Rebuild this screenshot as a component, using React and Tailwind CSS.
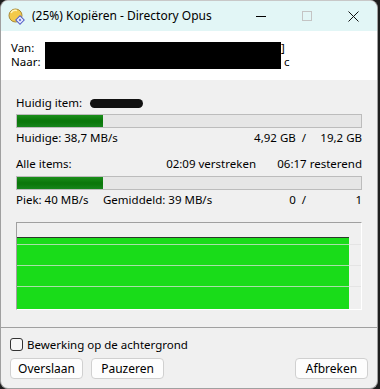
import React from 'react';

const font = { fontFamily: '"Noto Sans", "Segoe UI", sans-serif' };

function Bar({ pct }) {
  return (
    <div className="h-[14px] border border-[#bcbcbc] bg-[#e6e6e6]">
      <div
        className="h-full bg-[linear-gradient(#1b8f1b,#0b780b_45%,#0b780b_60%,#16851b)]"
        style={{ width: pct + '%' }}
      />
    </div>
  );
}

function Button({ children }) {
  return (
    <button className="w-[73px] h-[21px] bg-[#fdfdfd] border border-[#d0d0d0] rounded-[4px] text-[12px] text-black leading-none">
      {children}
    </button>
  );
}

export default function App() {
  return (
    <div className="w-[380px] h-[389px] bg-[#1e1e1e] flex" style={font}>
      <div className="w-[378px] h-[389px] bg-[#f0f0f0] rounded-lg border border-[#a0a0a0] border-t-[#c8c8c8] overflow-hidden flex flex-col">
        {/* titelbalk */}
        <div className="h-[30px] bg-[#e2f6f6] flex items-center shrink-0">
          <svg className="ml-[7px]" width="17" height="17" viewBox="0 0 17 17">
            <circle cx="7.5" cy="7.5" r="6.5" fill="#f3c94a" stroke="#a88a3a" strokeWidth="1" />
            <path d="M3 5 A5 5 0 0 1 9 2.5" stroke="#fff3b8" strokeWidth="1.5" fill="none" />
            <rect x="9" y="9" width="6" height="6" transform="rotate(45 12 12)" fill="#eef0ff" stroke="#5560c8" strokeWidth="1" />
            <rect x="11" y="11" width="2" height="2" transform="rotate(45 12 12)" fill="#5a6ad8" />
          </svg>
          <span className="ml-[7px] text-[12px] text-black">(25%) Kopiëren - Directory Opus</span>
          <div className="ml-auto flex items-center h-full">
            <div className="w-[46px] flex justify-center">
              <div className="w-[10px] h-px bg-black" />
            </div>
            <div className="w-[46px] flex justify-center">
              <div className="w-[10px] h-[10px] border border-[#c4c4c4]" />
            </div>
            <div className="w-[46px] flex justify-center mr-[1px]">
              <svg width="11" height="11" viewBox="0 0 11 11">
                <path d="M0.5 0.5 L10.5 10.5 M10.5 0.5 L0.5 10.5" stroke="#111" strokeWidth="1" />
              </svg>
            </div>
          </div>
        </div>

        {/* bron / doel */}
        <div className="h-[49px] bg-white shrink-0 relative text-[11.5px] text-black leading-[14px] pt-[10px] pl-[10px]">
          <div>Van:</div>
          <div>Naar:</div>
          <div className="absolute left-[44px] top-[11px] w-[236px] h-[27px] bg-black" />
          <span className="absolute left-[280px] top-[10px]">]</span>
          <span className="absolute left-[283px] top-[24px]">c</span>
        </div>

        {/* voortgang */}
        <div className="flex-1 px-[15px] pt-[16px] text-[11.5px] text-black leading-[14px]">
          <div className="flex items-center h-[14px]">
            <span className="w-[74px]">Huidig item:</span>
            <div className="w-[53px] h-[9px] bg-[#111] rounded-full" />
          </div>
          <div className="mt-[4px]">
            <Bar pct={25} />
          </div>
          <div className="flex mt-[3px] h-[14px]">
            <span>Huidige: 38,7 MB/s</span>
            <span className="ml-auto">4,92 GB&nbsp;&nbsp;/</span>
            <span className="w-[56px] text-right">19,2 GB</span>
          </div>

          <div className="flex mt-[12px] h-[14px]">
            <span>Alle items:</span>
            <span className="ml-auto">02:09 verstreken</span>
            <span className="w-[106px] text-right">06:17 resterend</span>
          </div>
          <div className="mt-[5px]">
            <Bar pct={25} />
          </div>
          <div className="flex mt-[3px] h-[14px]">
            <span className="w-[87px]">Piek: 40 MB/s</span>
            <span>Gemiddeld: 39 MB/s</span>
            <span className="ml-auto">0&nbsp;&nbsp;/</span>
            <span className="w-[56px] text-right">1</span>
          </div>

          {/* grafiek */}
          <div className="mt-[15px] h-[88px] border border-[#a0a0a0] border-r-white border-b-white flex flex-col">
            <div className="h-[14px]" />
            <div className="flex-1 relative">
              <div className="absolute left-0 right-0 top-[7px] h-px bg-[#e4e4e4]" />
              <div className="absolute left-0 right-0 top-[28px] h-px bg-[#e4e4e4]" />
              <div className="absolute left-0 right-0 top-[49px] h-px bg-[#e4e4e4]" />
              <div className="absolute left-0 top-0 bottom-0 w-[332px] bg-[#19dc19] border-t-[1.5px] border-[#2a3a2a]">
                <div className="absolute left-0 right-0 top-[6px] h-px bg-[#a8e0a8]" />
                <div className="absolute left-0 right-0 top-[27px] h-px bg-[#a8e0a8]" />
                <div className="absolute left-0 right-0 top-[48px] h-px bg-[#a8e0a8]" />
              </div>
            </div>
          </div>
        </div>

        {/* onderkant */}
        <div className="shrink-0 h-[61px] border-t border-[#a0a0a0] px-[9px] pt-[10px]">
          <label className="flex items-center gap-[4px] text-[11.5px] text-black h-[13px]">
            <span className="w-[13px] h-[13px] border border-[#333] rounded-[3px] bg-[#f7f7f7]" />
            Bewerking op de achtergrond
          </label>
          <div className="flex mt-[7px] gap-[8px]">
            <Button>Overslaan</Button>
            <Button>Pauzeren</Button>
            <div className="ml-auto flex">
              <Button>Afbreken</Button>
            </div>
          </div>
        </div>
      </div>
    </div>
  );
}
